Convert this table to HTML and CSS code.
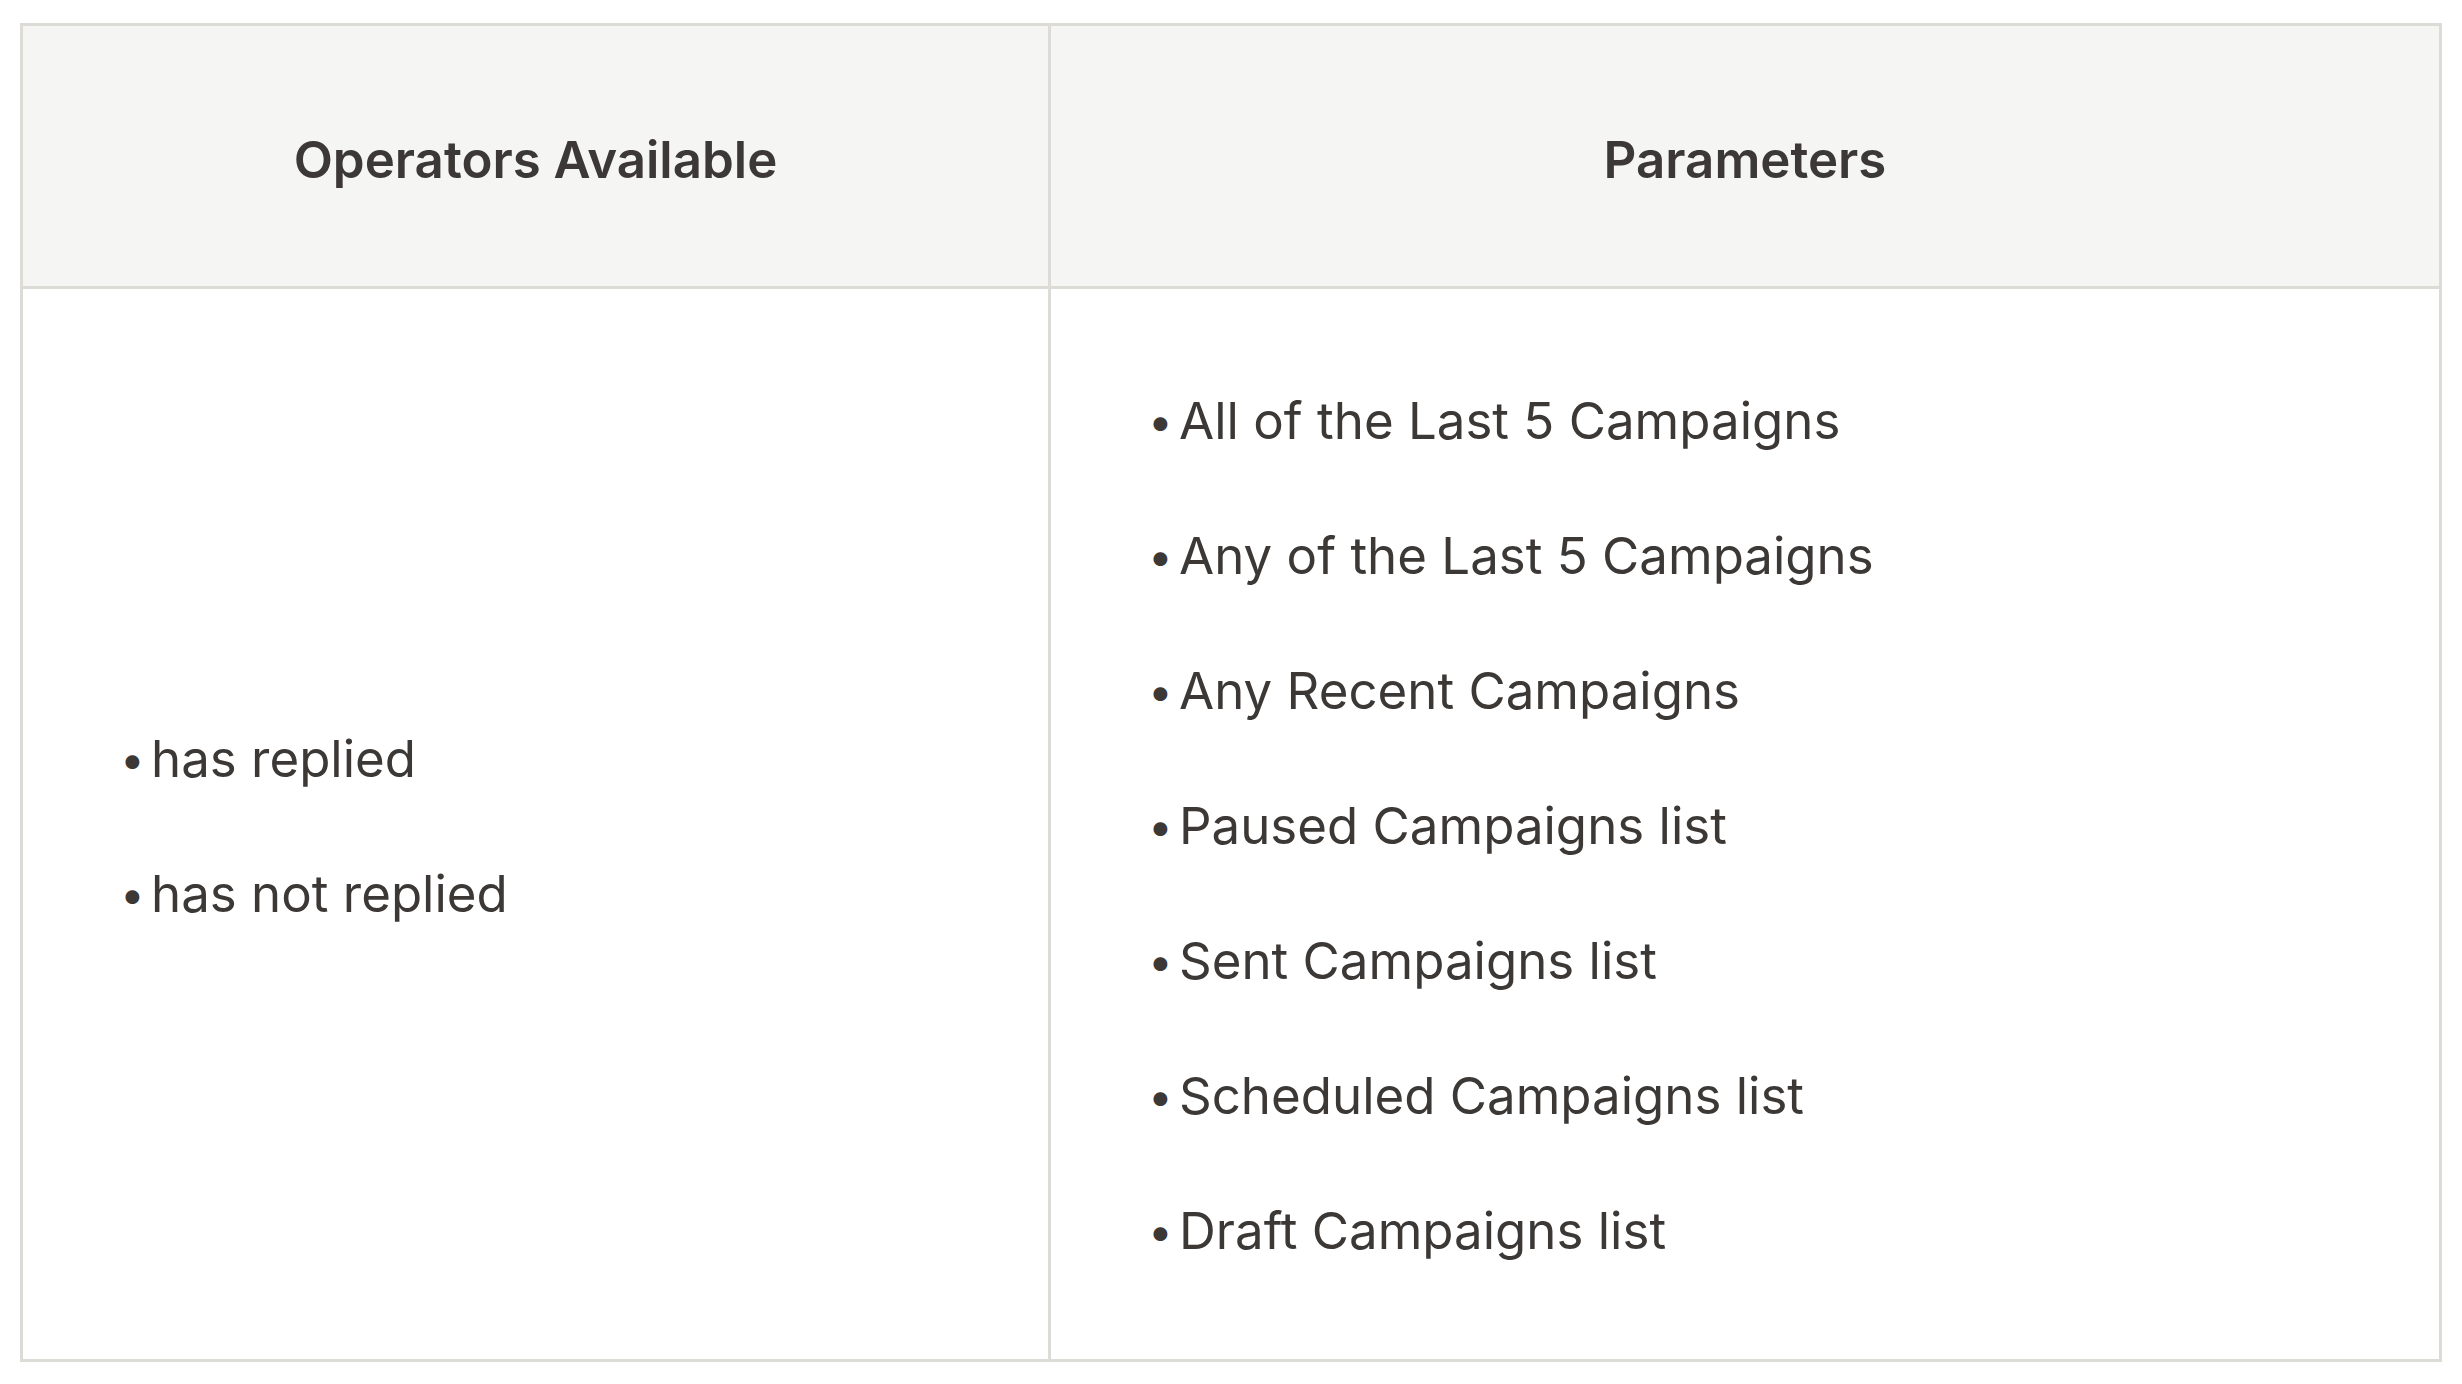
FILE: index.html
```html
<!DOCTYPE html>
<html lang="en">
<head>
<meta charset="utf-8">
<title>Operators and Parameters</title>
<link rel="stylesheet" href="styles.css">
</head>
<body>
<div class="page">
  <div class="grid">
    <div class="cell head">Operators Available</div>
    <div class="cell head">Parameters</div>
    <div class="cell body middle">
      <ul class="list">
        <li><span class="dot">•</span>has replied</li>
        <li><span class="dot">•</span>has not replied</li>
      </ul>
    </div>
    <div class="cell body">
      <ul class="list">
        <li><span class="dot">•</span>All of the Last 5 Campaigns</li>
        <li><span class="dot">•</span>Any of the Last 5 Campaigns</li>
        <li><span class="dot">•</span>Any Recent Campaigns</li>
        <li><span class="dot">•</span>Paused Campaigns list</li>
        <li><span class="dot">•</span>Sent Campaigns list</li>
        <li><span class="dot">•</span>Scheduled Campaigns list</li>
        <li><span class="dot">•</span>Draft Campaigns list</li>
      </ul>
    </div>
  </div>
</div>
</body>
</html>
```
FILE: styles.css
```css
html, body {
  margin: 0;
  padding: 0;
  background: #ffffff;
}
.page {
  padding: 23px 20px;
  font-family: "Inter", "Liberation Sans", sans-serif;
  color: #3c3836;
}
.grid {
  display: grid;
  grid-template-columns: 1028px 1391px;
  grid-template-rows: 263px 1073px;
  border-left: 3px solid #dcdbd6;
  border-top: 3px solid #dcdbd6;
  width: max-content;
}
.cell {
  border-right: 3px solid #dcdbd6;
  border-bottom: 3px solid #dcdbd6;
  box-sizing: border-box;
}
.head {
  background: #f5f5f3;
  display: flex;
  align-items: center;
  justify-content: center;
  font-weight: 600;
  font-size: 51px;
  padding-top: 6px;
}
.body {
  padding: 64px 0 0 96px;
}
.body.middle {
  padding-top: 4px;
  display: flex;
  align-items: center;
}
.list {
  list-style: none;
  margin: 0;
  padding: 0;
  font-size: 51px;
}
.list li {
  line-height: 135px;
  white-space: nowrap;
}
.dot {
  display: inline-block;
  width: 32px;
  font-size: 44px;
  line-height: 1;
  vertical-align: 2px;
  padding-left: 1px;
  box-sizing: border-box;
}
```
